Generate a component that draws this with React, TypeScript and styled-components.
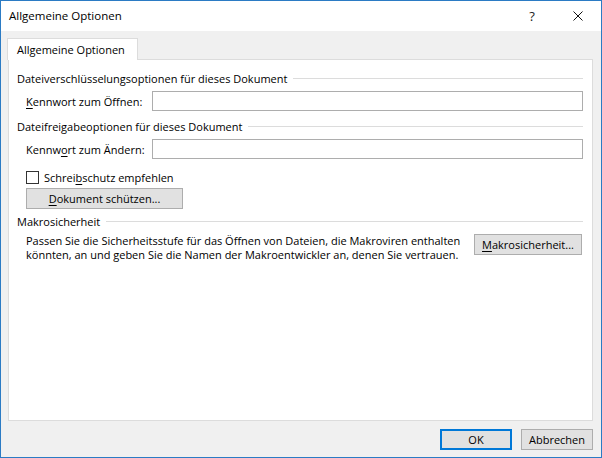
import React from "react";
import styled, { createGlobalStyle } from "styled-components";

const ui_font = `"Segoe UI", "Open Sans", "Noto Sans", sans-serif`;
const frame_blue = "#2b7bc4";
const face_gray = "#f0f0f0";
const edge_gray = "#adadad";
const rule_gray = "#dcdcdc";

const GlobalStyle = createGlobalStyle`
    html, body {
        margin: 0;
        padding: 0;
        background: #ffffff;
    }
    * {
        box-sizing: border-box;
    }
`;

const Window = styled.div`
    width: 602px;
    height: 458px;
    border: 1px solid ${frame_blue};
    display: flex;
    flex-direction: column;
    font-family: ${ui_font};
    font-size: 11px;
    color: #000;
    background: ${face_gray};
`;

const TitleBar = styled.div`
    height: 30px;
    background: #fff;
    display: flex;
    align-items: center;
    padding-left: 8px;
    flex-shrink: 0;
`;

const Title = styled.div`
    flex: 1;
    font-size: 11.5px;
    padding-bottom: 1px;
`;

const TitleButton = styled.div`
    width: 46px;
    height: 30px;
    display: flex;
    align-items: center;
    justify-content: center;
    font-size: 13px;
    color: #222;
`;

const Body = styled.div`
    flex: 1;
    display: flex;
    flex-direction: column;
    padding: 7px 8px 0 6px;
`;

const TabStrip = styled.div`
    display: flex;
    height: 21px;
    position: relative;
    z-index: 1;
`;

const Tab = styled.div`
    background: #fff;
    border: 1px solid ${rule_gray};
    border-bottom: none;
    padding: 3px 9px 0 9px;
    height: 22px;
    width: 131px;
    white-space: nowrap;
`;

const Panel = styled.div`
    height: 362px;
    background: #fff;
    border: 1px solid ${rule_gray};
    margin-left: 1px;
    padding: 10px 9px 0 8px;
    display: flex;
    flex-direction: column;
`;

const GroupHead = styled.div<{ $gap?: number }>`
    display: flex;
    align-items: center;
    gap: 6px;
    height: 16px;
    margin-top: ${(p) => p.$gap ?? 0}px;
    white-space: nowrap;

    &::after {
        content: "";
        flex: 1;
        height: 1px;
        background: ${rule_gray};
        margin-top: 1px;
    }
`;

const FieldRow = styled.div<{ $gap?: number }>`
    display: flex;
    align-items: center;
    padding-left: 9px;
    margin-top: ${(p) => p.$gap ?? 0}px;
`;

const FieldLabel = styled.label`
    width: 126px;
    flex-shrink: 0;
    white-space: nowrap;
`;

const TextBox = styled.div`
    flex: 1;
    height: 20px;
    border: 1px solid ${edge_gray};
    background: #fff;
`;

const CheckRow = styled.div<{ $gap?: number }>`
    display: flex;
    align-items: center;
    gap: 5px;
    padding-left: 9px;
    margin-top: ${(p) => p.$gap ?? 0}px;
`;

const CheckBox = styled.div`
    width: 13px;
    height: 13px;
    border: 1px solid #333;
    background: #fff;
`;

const PushButton = styled.div<{ $width: number; $default?: boolean }>`
    width: ${(p) => p.$width}px;
    height: 21px;
    background: #e1e1e1;
    border: ${(p) => (p.$default ? `2px solid #0078d7` : `1px solid ${edge_gray}`)};
    display: flex;
    align-items: center;
    justify-content: center;
    white-space: nowrap;
    flex-shrink: 0;
`;

const ButtonRow = styled.div<{ $gap?: number }>`
    display: flex;
    padding-left: 9px;
    margin-top: ${(p) => p.$gap ?? 0}px;
`;

const MacroRow = styled.div`
    display: flex;
    align-items: flex-start;
    justify-content: space-between;
    padding-left: 9px;
    padding-right: 1px;
    margin-top: 5px;
`;

const Para = styled.p`
    margin: 0;
    line-height: 14px;
    white-space: nowrap;
    padding-top: 0;
`;

const Footer = styled.div`
    display: flex;
    justify-content: flex-end;
    gap: 9px;
    padding: 8px 0 0 0;
`;

const U = styled.span`
    text-decoration: underline;
    text-underline-offset: 2px;
`;

const CloseGlyph = () => (
    <svg width="10" height="10" viewBox="0 0 10 10">
        <path d="M0.5 0.5 L9.5 9.5 M9.5 0.5 L0.5 9.5" stroke="#111" strokeWidth="1" fill="none" />
    </svg>
);

export const App = () => {
    return (
        <>
            <GlobalStyle />
            <Window>
                <TitleBar>
                    <Title>Allgemeine Optionen</Title>
                    <TitleButton>?</TitleButton>
                    <TitleButton>
                        <CloseGlyph />
                    </TitleButton>
                </TitleBar>
                <Body>
                    <TabStrip>
                        <Tab>Allgemeine Optionen</Tab>
                    </TabStrip>
                    <Panel>
                        <GroupHead>Dateiverschlüsselungsoptionen für dieses Dokument</GroupHead>
                        <FieldRow $gap={5}>
                            <FieldLabel>
                                <U>K</U>ennwort zum Öffnen:
                            </FieldLabel>
                            <TextBox />
                        </FieldRow>
                        <GroupHead $gap={7}>Dateifreigabeoptionen für dieses Dokument</GroupHead>
                        <FieldRow $gap={5}>
                            <FieldLabel>
                                Kennw<U>o</U>rt zum Ändern:
                            </FieldLabel>
                            <TextBox />
                        </FieldRow>
                        <CheckRow $gap={11}>
                            <CheckBox />
                            <span>
                                Schrei<U>b</U>schutz empfehlen
                            </span>
                        </CheckRow>
                        <ButtonRow $gap={3}>
                            <PushButton $width={157}>
                                <span>
                                    <U>D</U>okument schützen...
                                </span>
                            </PushButton>
                        </ButtonRow>
                        <GroupHead $gap={4}>Makrosicherheit</GroupHead>
                        <MacroRow>
                            <Para>
                                Passen Sie die Sicherheitsstufe für das Öffnen von Dateien, die Makroviren enthalten
                                <br />
                                könnten, an und geben Sie die Namen der Makroentwickler an, denen Sie vertrauen.
                            </Para>
                            <PushButton $width={108}>
                                <span>
                                    <U>M</U>akrosicherheit...
                                </span>
                            </PushButton>
                        </MacroRow>
                    </Panel>
                    <Footer>
                        <PushButton $width={72} $default>
                            OK
                        </PushButton>
                        <PushButton $width={72}>Abbrechen</PushButton>
                    </Footer>
                </Body>
            </Window>
        </>
    );
};

export default App;
